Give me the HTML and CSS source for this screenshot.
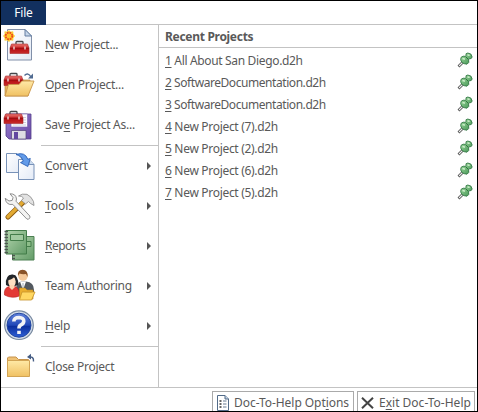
FILE: index.html
```
<!DOCTYPE html>
<html lang="en">
<head>
<meta charset="utf-8">
<title>Doc-To-Help</title>
<link rel="stylesheet" href="styles.css">
</head>
<body>
<svg class="defs" width="0" height="0" aria-hidden="true">
  <defs>
    <linearGradient id="red" x2="0" y2="1"><stop stop-color="#e77a76"/><stop offset=".4" stop-color="#cf2d2d"/><stop offset=".5" stop-color="#b80f14"/><stop offset="1" stop-color="#c62c2c"/></linearGradient>
    <linearGradient id="paper" x2="1" y2="1"><stop stop-color="#fff"/><stop offset="1" stop-color="#e3eaf6"/></linearGradient>
    <linearGradient id="gold" x2="0" y2="1"><stop stop-color="#ffe9a6"/><stop offset="1" stop-color="#f0c163"/></linearGradient>
    <linearGradient id="purple" x2="1" y2="1"><stop stop-color="#9a7fd0"/><stop offset="1" stop-color="#6748a6"/></linearGradient>
    <linearGradient id="green" x2="1" y2="1"><stop stop-color="#b4d5ae"/><stop offset="1" stop-color="#629b67"/></linearGradient>
    <linearGradient id="blue" x2="0" y2="1"><stop stop-color="#6384dc"/><stop offset=".5" stop-color="#2148b8"/><stop offset=".55" stop-color="#0c2f9e"/><stop offset="1" stop-color="#2e60d6"/></linearGradient>
    <linearGradient id="pinfill" x2="1" y2="1"><stop stop-color="#a5e0a3"/><stop offset="1" stop-color="#3b8c4d"/></linearGradient>
    <g id="toolbox">
      <path d="M6 3V1.2Q6 .5 7 .5H12Q13 .5 13 1.2V3" fill="none" stroke="#45474b" stroke-width="1.3"/>
      <path d="M1.5 3H17.5L19 7V12.5H0V7Z" fill="url(#red)" stroke="#a9282a" stroke-width=".6"/>
      <path d="M0 7.2H19" stroke="#8c090d" stroke-width=".8"/>
      <path d="M4 5.5V8.5M15 5.5V8.5" stroke="#f5e8e8" stroke-width="1.3"/>
    </g>
    <symbol id="pin" viewBox="0 0 16 22">
      <path d="M1.5 16.5L6 12" stroke="#444" stroke-width="2.6"/>
      <path d="M2 16L6 12" stroke="#f2f2f2" stroke-width="1.1"/>
      <path d="M4 7.4Q6 5.5 8.3 6.3L9 5.3Q8.2 3.2 10.8 3Q14.8 3.2 15.2 7Q14.6 9.2 12.2 8.8L11.6 9.8Q12.8 12.8 10 14.2Q6.8 14.2 4.8 12.2Q2.9 9.8 4 7.4Z" fill="url(#pinfill)" stroke="#2d7140" stroke-width=".8"/>
      <path d="M5.5 8.6L8 9.2M10.5 4.8L12.6 5.3" stroke="#dcf6d8" stroke-width="1.3"/>
      <path d="M8.6 6.6L11.4 9.4" stroke="#245f34" stroke-width=".8"/>
    </symbol>
  </defs>
</svg>
<div class="window">
  <div class="tabs"><div class="file-tab">File</div></div>
  <div class="main">
    <nav class="menu">
      <div class="item">
        <svg class="icon" viewBox="1 0 40 40">
          <path d="M7.5 4.5H25L31.5 11V35H7.5Z" fill="url(#paper)" stroke="#8190a9"/>
          <path d="M25 4.5V11H31.5Z" fill="#c6d6ea" stroke="#587398" stroke-width=".9"/>
          <use href="#toolbox" x="10" y="16"/>
          <path d="M9 5.5L10.7 7L13 6.7L13 9L14.7 11L13 13L13 15.3L10.7 15L9 16.6L7 15L4.8 15.3L5 13L3.5 11L5 9L4.8 6.7L7 7Z" fill="#ffc928" stroke="#f8d34e" stroke-width=".8"/>
          <circle cx="9" cy="11" r="3.3" fill="#ffc72e" stroke="#ed431b" stroke-width="1.8" stroke-dasharray="1.7 .9"/>
        </svg><span class="label new"><u>N</u>ew Project...</span>
      </div>
      <div class="item">
        <svg class="icon" viewBox="1 0 40 40">
          <path d="M5 31V18H13L15 15H30V20L28 31Z" fill="#e7b45d" stroke="#b88b43" stroke-width=".7"/>
          <use href="#toolbox" x="4" y="8"/>
          <path d="M8.5 19.5H19L22 16H34L28 31H5Z" fill="url(#gold)" stroke="#c9954a" stroke-width=".9"/>
          <path d="M24.5 10.5Q28 7 31 12" fill="none" stroke="#506b91" stroke-width="1.4"/><path d="M33 8.5V13.5H28Z" fill="#506b91"/>
        </svg><span class="label open"><u>O</u>pen Project...</span>
      </div>
      <div class="item">
        <svg class="icon" viewBox="1 0 40 40">
          <path d="M6 9H31V34H9L6 31Z" fill="url(#purple)" stroke="#55418a" stroke-width=".8"/>
          <path d="M11 9H27.5V22H11Z" fill="#fafaff" stroke="#775fac" stroke-width=".6"/>
          <path d="M13 12.5H26M13 15H26M13 17.5H26M13 20H26" stroke="#c7c6d2" stroke-width=".8"/>
          <path d="M11.5 25.5H26V34H11.5Z" fill="#dedde4" stroke="#51437a" stroke-width=".7"/><path d="M14 27H18V34H14Z" fill="#6248a0"/>
          <use href="#toolbox" x="4" y="6"/>
        </svg><span class="label save">Sav<u>e</u> Project As...</span>
      </div>
      <div class="rule"></div>
      <div class="item">
        <svg class="icon" viewBox="1 0 40 40">
          <path d="M6.5 7.5H17L21.5 12V26.5H6.5Z" fill="url(#paper)" stroke="#7892b8"/>
          <path d="M18.5 13.5H29L34 18.5V33.5H18.5Z" fill="url(#paper)" stroke="#7892b8"/><path d="M29 14V18.5H34" fill="#cbdcf1" stroke="#7892b8"/>
          <path d="M16 8.5Q25 5.5 27.8 13.2L30.3 12.5L27.8 20.5L20.5 16.6L23.3 15.2Q21.8 9.8 16 8.5Z" fill="#629be9" stroke="#2b61b5" stroke-width=".9"/>
        </svg><span class="label convert"><u>C</u>onvert</span><i class="arrow"></i>
      </div>
      <div class="item">
        <svg class="icon" viewBox="1 0 40 40">
          <path d="M24 15.5L8 31" stroke="#8c5c12" stroke-width="5.2" stroke-linecap="round"/><path d="M24 15L8 30.8" stroke="#e3aa32" stroke-width="3.4" stroke-linecap="round"/>
          <path d="M18.5 10Q22 7.2 27 8.3Q31.5 10.5 33.5 15.5L34 19.5Q30 17.5 28.5 15.5L25.5 18L21.5 14.5L23.5 12Q22 9.8 18.5 10Z" fill="#e2e2e2" stroke="#888" stroke-width=".8"/>
          <path d="M10 7.8Q16 7.6 16.5 13L16 15.2L29.8 30Q30.5 33.4 27 33.2L12.8 18.4Q6.2 19.5 5.2 12.3L9 15L12.2 14.4L13 11.5Z" fill="#f3f3f2" stroke="#828282" stroke-width=".9"/>
        </svg><span class="label tools"><u>T</u>ools</span><i class="arrow"></i>
      </div>
      <div class="item">
        <svg class="icon" viewBox="1 0 40 40">
          <path d="M12.5 10.5H34V34H12.5Z" fill="url(#green)" stroke="#4c8053"/><path d="M25 15.5H31V20.5H25Z" fill="#8dbd89" stroke="#437c49"/>
          <path d="M6 4.5H26.5V28H6Z" fill="url(#green)" stroke="#437c49"/><path d="M10.5 8.5H23.5V14.5H10.5Z" fill="#a2caa0" stroke="#437c49"/>
          <path d="M4.5 5.5H8M4.5 8.5H8M4.5 11.5H8M4.5 14.5H8M4.5 17.5H8M4.5 20.5H8M4.5 23.5H8M4.5 26.5H8M12 29.5H15M12 32.5H15" stroke="#4d5750" stroke-width="1.3"/>
        </svg><span class="label reports"><u>R</u>eports</span><i class="arrow"></i>
      </div>
      <div class="item">
        <svg class="icon" viewBox="1 0 40 40">
          <path d="M16 23Q16 17 21 15.5H26Q34 16 34 24V29H16Z" fill="#52585f"/><path d="M20 15.5L23 24L26 15.5Z" fill="#fff"/><path d="M23 17V23" stroke="#9daab6"/>
          <circle cx="23" cy="10" r="4.8" fill="#f4c99b"/><path d="M18 10Q17 4 22.5 3.7Q28.5 4 27.5 11L26 8Q22 8.5 19.5 7.5Z" fill="#895329"/>
          <path d="M4.5 29Q3.5 22 9 20.5H15Q19.5 22 19.5 30Q12 33 4.5 29Z" fill="#e33a35" stroke="#b51e20" stroke-width=".6"/>
          <path d="M6 19Q5 9 12 8.5Q19 9 18 19L15 20H8Z" fill="#23262a"/><ellipse cx="12" cy="15.7" rx="3.7" ry="5.2" fill="#ffdfc2"/><path d="M8 14Q12 14 15 10Q15 13 16 15L16 10Q12 7 8 11Z" fill="#23262a"/><path d="M9 21L12 24L15 21L13 19H11Z" fill="#ffd5b2"/>
          <path d="M19.5 22H25L27 24H33V33H19.5Z" fill="#eaae2d" stroke="#b98625" stroke-width=".6"/><path d="M22 26H35L31.5 34H19.5Z" fill="#ffd863" stroke="#c69329" stroke-width=".8"/>
        </svg><span class="label team">Team A<u>u</u>thoring</span><i class="arrow"></i>
      </div>
      <div class="item">
        <svg class="icon" viewBox="1 0 40 40">
          <circle cx="19" cy="19.2" r="14.3" fill="#d3dce8" stroke="#7889a0" stroke-width="1.2"/><circle cx="19" cy="19.2" r="12" fill="url(#blue)" stroke="#2448a1"/>
          <path d="M13.8 15.5Q14 11.5 19 11.5Q24 11.7 23.8 15.3Q23.5 18 20.8 19Q19 19.7 19 22.5M19 24.7V28" fill="none" stroke="#f2f3f6" stroke-width="3.6"/>
        </svg><span class="label help"><u>H</u>elp</span><i class="arrow"></i>
      </div>
      <div class="rule"></div>
      <div class="item">
        <svg class="icon" viewBox="1 0 40 40">
          <path d="M7.5 29.5V11L8.5 10H16L18.5 12.5H28.5V29.5Z" fill="#efc174" stroke="#c6934c"/>
          <path d="M7.5 13.5H29.5V29.5H7.5Z" fill="url(#gold)" stroke="#d2a454"/>
          <path d="M28.5 10Q34 9 33.5 14.5" fill="none" stroke="#465d84" stroke-width="1.4"/><path d="M27 10L31 6.8V12.5Z" fill="#465d84"/>
        </svg><span class="label close">C<u>l</u>ose Project</span>
      </div>
    </nav>
    <section class="recent">
      <h1><span class="title">Recent Projects</span></h1>
      <div class="row"><span class="a"><u>1</u> All About San Diego.d2h</span><svg class="pin"><use href="#pin"/></svg></div>
      <div class="row"><span class="b"><u>2</u> SoftwareDocumentation.d2h</span><svg class="pin"><use href="#pin"/></svg></div>
      <div class="row"><span class="b"><u>3</u> SoftwareDocumentation.d2h</span><svg class="pin"><use href="#pin"/></svg></div>
      <div class="row"><span class="c"><u>4</u> New Project (7).d2h</span><svg class="pin"><use href="#pin"/></svg></div>
      <div class="row"><span class="c"><u>5</u> New Project (2).d2h</span><svg class="pin"><use href="#pin"/></svg></div>
      <div class="row"><span class="c"><u>6</u> New Project (6).d2h</span><svg class="pin"><use href="#pin"/></svg></div>
      <div class="row"><span class="c"><u>7</u> New Project (5).d2h</span><svg class="pin"><use href="#pin"/></svg></div>
    </section>
  </div>
  <footer class="footer">
    <div class="button options">
      <svg width="12" height="16" viewBox="0 0 12 16"><path d="M.5 .5H8L11.5 4V15.5H.5Z" fill="#fff" stroke="#526b88"/><path d="M8 .5V4H11.5" fill="#c4d5e8" stroke="#526b88"/><path d="M2.5 6H4.5M2.5 9H4.5M2.5 12H4.5" stroke="#333" stroke-width="1.7"/><path d="M6 6H9.5M6 9H9.5M6 12H9.5" stroke="#667b91"/></svg>
      <span class="opt-label">Doc-To-Help Opt<u>i</u>ons</span>
    </div>
    <div class="button exit">
      <svg width="13" height="12" viewBox="0 0 13 12"><path d="M1 .8L12 11.2M12 .8L1 11.2" stroke="#444" stroke-width="2"/></svg>
      <span class="exit-label">E<u>x</u>it Doc-To-Help</span>
    </div>
  </footer>
</div>
</body>
</html>
```

FILE: styles.css
```
* { box-sizing: border-box; }
body { margin: 0; overflow: hidden; background: #fff; color: #595959; font: 12px/16px "Noto Sans", "Open Sans", sans-serif; }
.defs { display: block; }
.window { width: 478px; height: 412px; border: 1px solid #000; overflow: hidden; display: flex; flex-direction: column; }
.tabs { height: 24px; flex: none; border-bottom: 1px solid #c3c3c3; }
.file-tab { width: 45px; height: 24px; background: #12305f; color: #fff; text-align: center; line-height: 24px; letter-spacing: -.2px; }
.main { height: 363px; flex: none; display: flex; border-bottom: 1px solid #c3c3c3; }
.menu { width: 158px; flex: none; border-right: 1px solid #c3c3c3; }
.item { height: 40px; display: flex; align-items: center; padding-right: 7px; }
.icon { width: 40px; height: 40px; flex: none; margin-right: 4px; }
.rule { height: 1px; margin-left: 40px; background: #c3c3c3; }
.arrow { margin-left: auto; border: 4px solid transparent; border-left: 4px solid #555; border-right: 0; }
u { text-decoration-thickness: 1px; text-underline-offset: 2px; text-decoration-skip-ink: none; }
span { white-space: nowrap; }
.label { letter-spacing: -.27px; }
.tools { letter-spacing: -.05px; }
.reports { letter-spacing: -.5px; }
.recent { flex: 1; }
h1 { margin: 0 0 2px; height: 23px; padding-left: 6px; border-bottom: 1px solid #c3c3c3; font-size: 12px; line-height: 24px; }
.title { letter-spacing: -.3px; }
.row { height: 22px; display: flex; align-items: center; justify-content: space-between; padding: 0 4px 0 6px; }
.a { letter-spacing: -.34px; }
.b { letter-spacing: -.44px; }
.c { letter-spacing: -.31px; }
.pin { width: 16px; height: 22px; }
.footer { flex: 1; min-height: 0; display: flex; justify-content: flex-end; gap: 3px; padding: 3px 2px 0 0; }
.button { height: 24px; flex: none; display: flex; align-items: center; border: 1px solid #aaa; }
.options { width: 142px; padding-left: 4px; gap: 5px; }
.opt-label { letter-spacing: -.05px; }
.exit { width: 118px; padding-left: 3px; gap: 5px; }
```
